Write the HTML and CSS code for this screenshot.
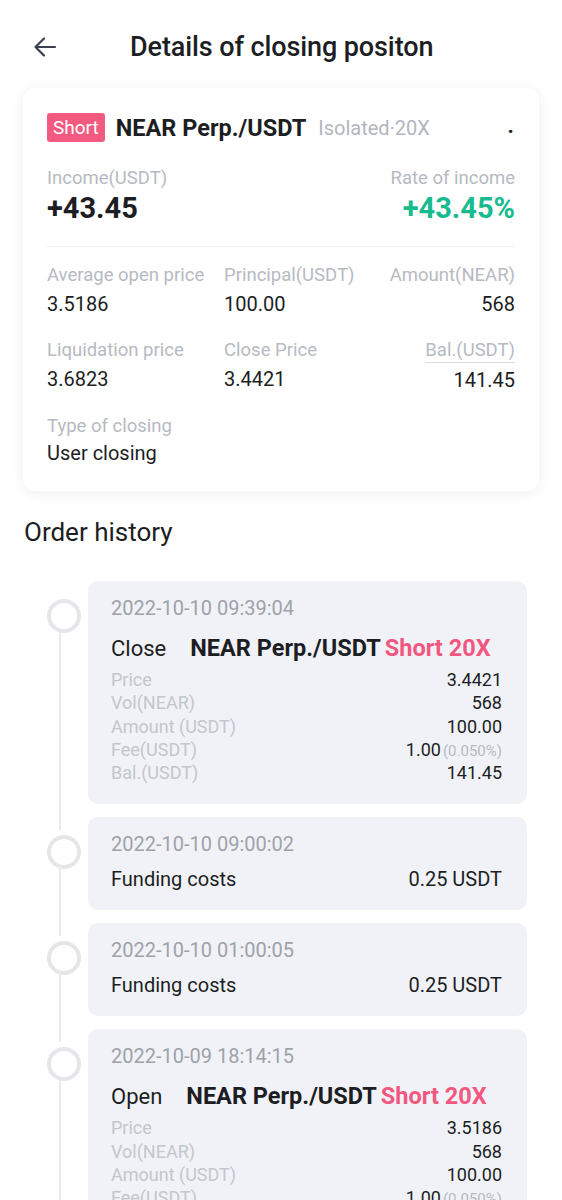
FILE: index.html
```html
<!DOCTYPE html>
<html>
<head>
<meta charset="utf-8">
<link rel="stylesheet" href="styles.css">
</head>
<body>
<header class="topbar">
  <svg class="back" width="24" height="24" viewBox="0 0 24 24"><path d="M22 12H3M11 3.5L2.5 12L11 20.5" fill="none" stroke="#3b4050" stroke-width="2.2" stroke-linecap="round" stroke-linejoin="round"/></svg>
  <h1 class="title">Details of closing positon</h1>
</header>

<section class="card">
  <div class="pair-row">
    <span class="badge">Short</span>
    <span class="pair">NEAR Perp./USDT</span>
    <span class="mode">Isolated·20X</span>
    <span class="dot">.</span>
  </div>
  <div class="income-row">
    <div class="col">
      <div class="label">Income(USDT)</div>
      <div class="big">+43.45</div>
    </div>
    <div class="col right">
      <div class="label">Rate of income</div>
      <div class="big green">+43.45%</div>
    </div>
  </div>
  <div class="divider"></div>
  <div class="grid">
    <div class="cell"><div class="label">Average open price</div><div class="val">3.5186</div></div>
    <div class="cell"><div class="label">Principal(USDT)</div><div class="val">100.00</div></div>
    <div class="cell right"><div class="label">Amount(NEAR)</div><div class="val">568</div></div>
    <div class="cell"><div class="label">Liquidation price</div><div class="val">3.6823</div></div>
    <div class="cell"><div class="label">Close Price</div><div class="val">3.4421</div></div>
    <div class="cell right"><div class="label"><span class="uline">Bal.(USDT)</span></div><div class="val">141.45</div></div>
    <div class="cell wide"><div class="label">Type of closing</div><div class="val last">User closing</div></div>
  </div>
</section>

<h2 class="section-title">Order history</h2>

<div class="timeline">
  <div class="item">
    <div class="ocard">
      <div class="date">2022-10-10 09:39:04</div>
      <div class="head"><span class="act">Close</span><span class="opair">NEAR Perp./USDT</span> <span class="side">Short 20X</span></div>
      <div class="rows">
        <div class="row"><span class="k">Price</span><span class="v">3.4421</span></div>
        <div class="row"><span class="k">Vol(NEAR)</span><span class="v">568</span></div>
        <div class="row"><span class="k">Amount (USDT)</span><span class="v">100.00</span></div>
        <div class="row"><span class="k">Fee(USDT)</span><span class="v">1.00<small>(0.050%)</small></span></div>
        <div class="row"><span class="k">Bal.(USDT)</span><span class="v">141.45</span></div>
      </div>
    </div>
  </div>
  <div class="item">
    <div class="ocard small-card">
      <div class="date">2022-10-10 09:00:02</div>
      <div class="fund"><span>Funding costs</span><span>0.25 USDT</span></div>
    </div>
  </div>
  <div class="item">
    <div class="ocard small-card">
      <div class="date">2022-10-10 01:00:05</div>
      <div class="fund"><span>Funding costs</span><span>0.25 USDT</span></div>
    </div>
  </div>
  <div class="item">
    <div class="ocard">
      <div class="date">2022-10-09 18:14:15</div>
      <div class="head"><span class="act">Open</span><span class="opair">NEAR Perp./USDT</span> <span class="side">Short 20X</span></div>
      <div class="rows">
        <div class="row"><span class="k">Price</span><span class="v">3.5186</span></div>
        <div class="row"><span class="k">Vol(NEAR)</span><span class="v">568</span></div>
        <div class="row"><span class="k">Amount (USDT)</span><span class="v">100.00</span></div>
        <div class="row"><span class="k">Fee(USDT)</span><span class="v">1.00<small>(0.050%)</small></span></div>
        <div class="row"><span class="k">Bal.(USDT)</span><span class="v">141.45</span></div>
      </div>
    </div>
  </div>
</div>
</body>
</html>
```
FILE: styles.css
```css
* { box-sizing: border-box; }
html, body { margin: 0; padding: 0; background: #ffffff; }
body {
  font-family: Roboto, "Liberation Sans", sans-serif;
  color: #1c1e23;
  width: 562px;
  height: 1200px;
  overflow: hidden;
}
.topbar {
  height: 88px;
  display: flex;
  align-items: center;
  padding: 6px 0 0 33px;
}
.back { display: block; flex: none; }
.title {
  margin: 0 0 0 73px;
  font-size: 27px;
  font-weight: 500;
  color: #1c1e23;
  letter-spacing: -0.1px;
}
.card {
  margin: 0 23px;
  background: #fff;
  border-radius: 12px;
  box-shadow: 0 2px 14px rgba(20, 30, 60, 0.07);
  padding: 25px 24px 25px 24px;
}
.pair-row { display: flex; align-items: center; height: 29px; }
.badge {
  background: #f25a80;
  color: #fff;
  font-size: 19px;
  height: 29px;
  line-height: 29px;
  padding: 0 6px;
  border-radius: 3px;
}
.pair { font-size: 23.5px; font-weight: 700; margin-left: 11px; }
.mode { font-size: 20px; color: #b2b6be; margin-left: 12px; }
.dot { margin-left: auto; font-weight: 700; font-size: 22px; padding-right: 1px; position: relative; top: -2px; }
.income-row { display: flex; justify-content: space-between; margin-top: 24px; }
.right { text-align: right; }
.label { font-size: 18.5px; line-height: 24px; color: #b6bac2; }
.big { font-size: 29px; font-weight: 700; line-height: 32px; margin-top: 2px; }
.green { color: #17bb8f; }
.divider { height: 1px; background: #eceef1; margin-top: 22px; }
.grid {
  display: grid;
  grid-template-columns: 177px 1fr auto;
  row-gap: 21px;
  margin-top: 16px;
}
.wide { grid-column: 1 / 4; }
.val { font-size: 20px; line-height: 26px; margin-top: 4px; }
.val.last { margin-top: 2px; }
.uline { display: inline-block; border-bottom: 1px solid #d9dce1; line-height: 23px; }
.section-title {
  margin: 27px 0 0 24px;
  font-size: 26px;
  font-weight: 400;
  line-height: 28px;
  color: #1c1e23;
}
.timeline { padding: 35px 35px 0 88px; display: flex; flex-direction: column; gap: 13px; }
.item { position: relative; }
.item::before {
  content: "";
  position: absolute;
  left: -41px;
  top: 18px;
  width: 26px;
  height: 26px;
  border: 4px solid #e5e6e9;
  border-radius: 50%;
  background: #fff;
}
.item::after {
  content: "";
  position: absolute;
  left: -29px;
  width: 2px;
  top: 50px;
  bottom: -26px;
  background: #eaebee;
}
.ocard {
  background: #f0f2f7;
  border-radius: 10px;
  padding: 15px 25px 20px 23px;
}
.date { font-size: 20px; line-height: 24px; color: #9ea2aa; }
.head { margin-top: 13px; line-height: 30px; white-space: nowrap; }
.act { font-size: 22px; margin-right: 24px; }
.opair { font-size: 23.5px; font-weight: 700; }
.side { font-size: 23.5px; font-weight: 700; color: #f2587f; }
.rows { margin-top: 2px; }
.row { display: flex; justify-content: space-between; align-items: baseline; height: 23.25px; line-height: 23px; font-size: 18px; }
.k { color: #c3c6cd; }
.v { color: #1c1e23; }
.v small { font-size: 15px; line-height: 1; color: #b6bac2; margin-left: 2px; }
.small-card { padding-bottom: 18px; }
.fund { display: flex; justify-content: space-between; font-size: 20px; line-height: 26px; margin-top: 10px; }
```
